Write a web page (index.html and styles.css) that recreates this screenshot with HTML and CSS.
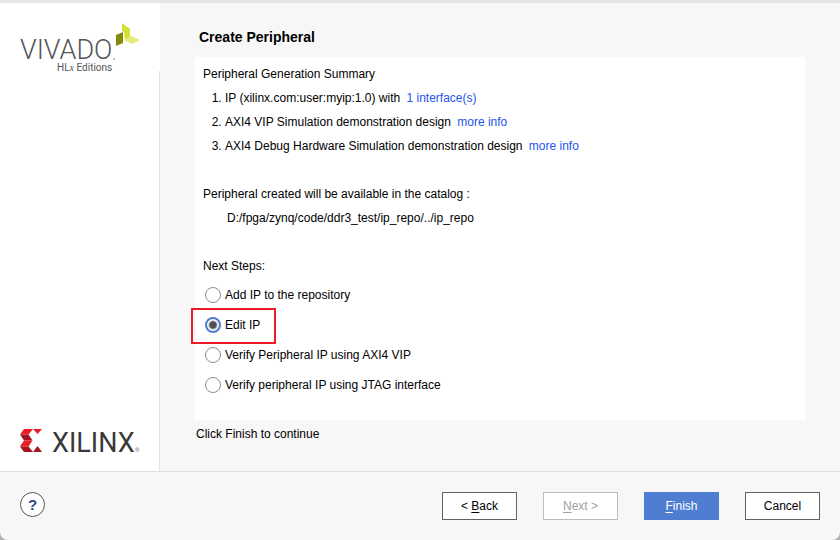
FILE: index.html
```html
<!DOCTYPE HTML>
<html lang="en">
<head>
	<title>Create Peripheral</title>
	<meta charset="utf-8">
	<link rel="stylesheet" href="styles.css">
</head>
<body>
	<form class="wizard">
		<div class="main">
			<aside class="sidebar">
				<svg class="vivado" viewBox="0 0 140 56" role="img" aria-label="Vivado HLx Editions">
					<text class="vivado-name" x="20" y="41">VIVADO</text>
					<text class="vivado-edition" x="57" y="53">HL<tspan class="edition-x">x</tspan> Editions</text>
					<circle cx="114" cy="41" r="0.8" fill="#777777" />
					<path d="M122 5l8 6v8l-5 3-1-8-2-1z" fill="#d2df33" />
					<path d="M116 17l7-3v11l-7 3z" fill="#858b09" />
					<path d="M123.500 22l7.500-4 9 4-8 4z" fill="#e3eb7d" />
				</svg>
				<svg class="xilinx" viewBox="0 0 140 32" role="img" aria-label="Xilinx">
					<path d="M24 5h9l-4.500 5.500h-8.500z" fill="#ec1c24" />
					<path d="M33 5h9l-4.500 5z" fill="#ec1c24" />
					<path d="M20 10.500h8.500l4 6h-8.500z" fill="#a3151f" />
					<path d="M24 16.500h8.500l-4 6h-8.500z" fill="#ec1c24" />
					<path d="M20 22.500h8.500l4.500 5.500h-9z" fill="#a3151f" />
					<path d="M33 28h9l-4.500-6z" fill="#a3151f" />
					<text class="xilinx-name" x="52" y="28">XILINX</text>
					<text class="xilinx-mark" x="135" y="28">®</text>
				</svg>
			</aside>

			<section class="content">
				<h1>Create Peripheral</h1>
				<div class="panel">
					<p>Peripheral Generation Summary</p>
					<ol>
						<li>IP (xilinx.com:user:myip:1.0) with <a href="#interfaces">1 interface(s)</a></li>
						<li>AXI4 VIP Simulation demonstration design <a href="#vip">more info</a></li>
						<li>AXI4 Debug Hardware Simulation demonstration design <a href="#debug">more info</a></li>
					</ol>
					<p class="group">Peripheral created will be available in the catalog :</p>
					<p class="path">D:/fpga/zynq/code/ddr3_test/ip_repo/../ip_repo</p>

					<fieldset class="steps">
						<legend>Next Steps:</legend>
						<div class="step">
							<input type="radio" name="step" id="add">
							<label for="add">Add IP to the repository</label>
						</div>
						<div class="step marked">
							<input type="radio" name="step" id="edit" checked>
							<label for="edit">Edit IP</label>
						</div>
						<div class="step">
							<input type="radio" name="step" id="verify-vip">
							<label for="verify-vip">Verify Peripheral IP using AXI4 VIP</label>
						</div>
						<div class="step">
							<input type="radio" name="step" id="verify-jtag">
							<label for="verify-jtag">Verify peripheral IP using JTAG interface</label>
						</div>
					</fieldset>
				</div>
				<p class="hint">Click Finish to continue</p>
			</section>
		</div>

		<footer class="footer">
			<button type="button" class="help" aria-label="Help">?</button>
			<div class="buttons">
				<button type="button" class="btn">&lt; <u>B</u>ack</button>
				<button type="button" class="btn" disabled><u>N</u>ext &gt;</button>
				<button type="submit" class="btn primary"><u>F</u>inish</button>
				<button type="button" class="btn">Cancel</button>
			</div>
		</footer>
	</form>
</body>
</html>
```

FILE: styles.css
```css
*,
*::after {
	box-sizing: border-box;
}

body {
	margin: 0;
	background: #b4b4b4;
	color: #000000;
	font-family: "Liberation Sans", Arial, sans-serif;
	font-size: 12px;
	line-height: 24px;
}

.wizard {
	display: flex;
	flex-direction: column;
	min-height: 100vh;
	border-top: 3px solid #e6e6e6;
	border-radius: 0 0 8px 8px;
	background: #f7f7f7;
}

.main {
	display: flex;
	flex: 1;
}

/* Logo column, the divider starts below the logo */
.sidebar {
	display: flex;
	flex-direction: column;
	justify-content: space-between;
	width: 160px;
	padding: 15px 0;
	background: linear-gradient(#e2e2e2, #e2e2e2) right 68px / 1px 100% no-repeat #ffffff;
}

.vivado,
.xilinx {
	display: block;
	width: 140px;
	overflow: visible;
}

.vivado-name {
	font-family: Roboto, sans-serif;
	font-size: 27px;
	font-weight: 300;
	fill: #555555;
}

.vivado-edition {
	font-family: Roboto, sans-serif;
	font-size: 10px;
	fill: #555555;
}

.edition-x {
	font-family: "Liberation Serif", serif;
	font-style: italic;
}

.xilinx-name {
	font-family: Roboto, sans-serif;
	font-size: 27px;
	fill: #393939;
}

.xilinx-mark {
	font-size: 6px;
	fill: #555555;
}

/* Summary */
.content {
	flex: 1;
	padding: 22px 35px 24px;
}

h1 {
	margin: 0 4px 8px;
	font-size: 14px;
	line-height: 24px;
}

p {
	margin: 0;
}

.panel {
	padding: 5px 8px 20px;
	background: #ffffff;
}

ol {
	margin: 0;
	padding-left: 22px;
}

a {
	margin-left: 3px;
	color: #2554eb;
	text-decoration: none;
}

.group {
	margin-top: 24px;
}

.path {
	padding-left: 24px;
}

.steps {
	margin: 24px 0 0;
	padding: 0;
	border: 0;
}

legend {
	margin-bottom: 2px;
	padding: 0;
}

.step {
	position: relative;
	display: flex;
	align-items: center;
	gap: 4px;
	height: 30px;
	padding-left: 2px;
}

.step input {
	appearance: none;
	width: 16px;
	height: 16px;
	margin: 0;
	border: 1px solid #8c8c8c;
	border-radius: 50%;
	background: #ffffff;
}

.step input:checked {
	border: 2px solid #4f7dd1;
	background: radial-gradient(circle, #505050 3px, #ffffff 5px);
}

.marked::after {
	content: "";
	position: absolute;
	top: -2px;
	left: -12px;
	width: 85px;
	height: 36px;
	border: 2px solid #ec1c24;
	pointer-events: none;
}

.hint {
	padding: 2px 1px 0;
}

/* Button bar */
.footer {
	display: flex;
	align-items: flex-start;
	justify-content: space-between;
	padding: 20px;
	border-top: 1px solid #dfdfdf;
}

button {
	padding: 0;
	font: inherit;
}

.help {
	width: 25px;
	height: 25px;
	border: 1px solid #555555;
	border-radius: 50%;
	background: #ffffff;
	color: #2c4a80;
	font-size: 15px;
	font-weight: bold;
	line-height: 23px;
}

.buttons {
	display: flex;
	gap: 26px;
}

.btn {
	width: 75px;
	height: 28px;
	border: 1px solid #626262;
	background: #ffffff;
	color: #000000;
}

.btn:disabled {
	border-color: #bdbdbd;
	color: #a0a0a0;
}

.primary {
	border-color: #4f7dd1;
	background: #4f7dd1;
	color: #ffffff;
}

u {
	text-underline-offset: 2px;
}
```
